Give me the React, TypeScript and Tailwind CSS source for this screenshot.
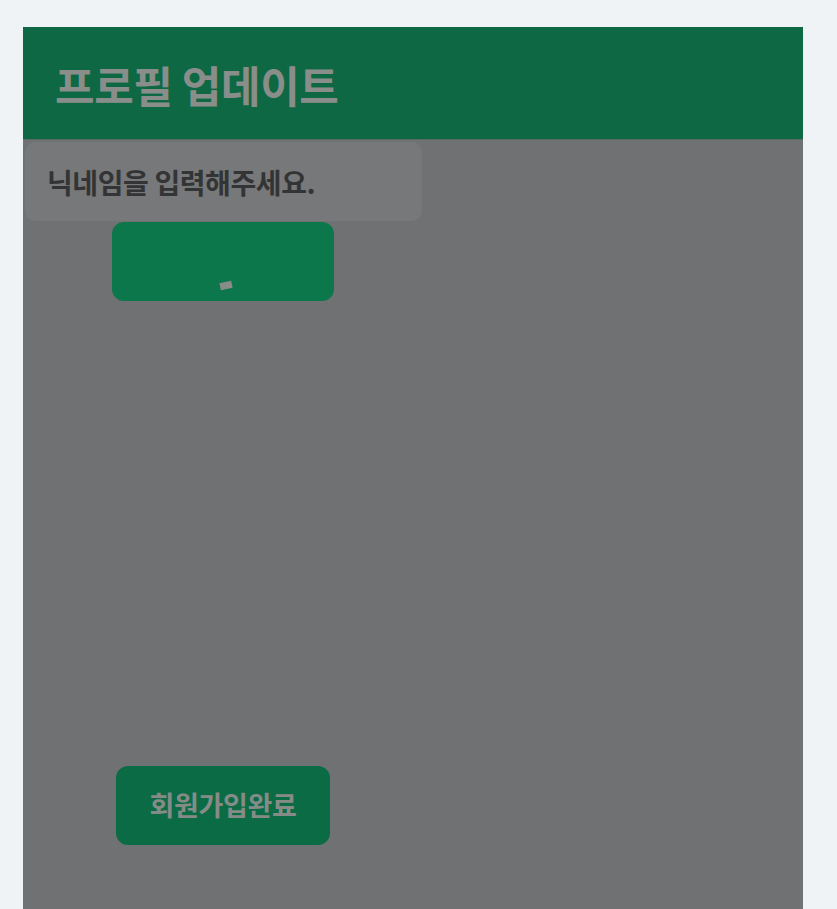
import React from "react";

const font = { fontFamily: '"Noto Sans CJK KR", "Noto Sans", sans-serif' };

export default function App() {
  return (
    <div className="min-h-[909px] bg-[#eff3f6] pt-[27px] pl-[23px]" style={font}>
      <div className="w-[780px] h-[882px] bg-[#707172] flex flex-col">
        <header className="h-[113px] bg-[#0e6843] border-b border-[#5c6b63] flex items-center pl-[32px] pt-[2px]">
          <h1 className="text-[43px] font-bold text-[#8a8e8b] tracking-[-0.4px] leading-none">프로필 업데이트</h1>
        </header>
        <div>
          <div className="mt-[2px] ml-[2px] w-[397px] h-[79px] rounded-[10px] bg-[#777879] flex items-center pl-[22px]">
            <span className="text-[28px] font-bold text-[#333435] tracking-[-0.4px]">닉네임을 입력해주세요.</span>
          </div>
          <div className="ml-[89px] mt-[1px] w-[222px] h-[79px] rounded-[12px] bg-[#0b774b] flex items-end justify-center pb-[12px]">
            <span className="block w-[12px] h-[7px] bg-[#8a8c8a] -rotate-12 ml-[6px]" />
          </div>
        </div>
        <div className="ml-[93px] mt-[465px] w-[214px] h-[79px] rounded-[12px] bg-[#0b6b45] flex items-center justify-center">
          <span className="text-[27px] font-bold text-[#858c88] tracking-[-0.3px]">회원가입완료</span>
        </div>
      </div>
    </div>
  );
}
